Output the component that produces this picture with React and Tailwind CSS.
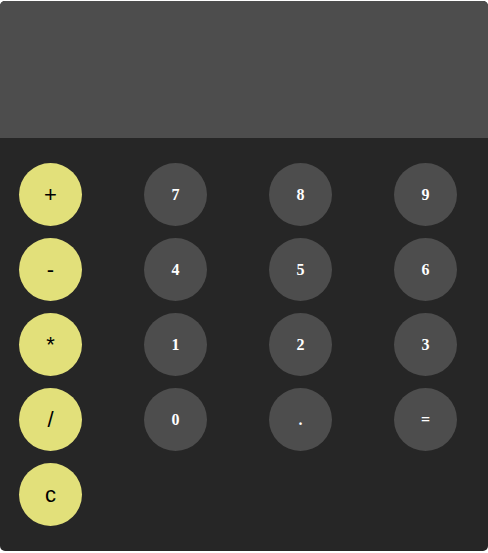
import React from 'react';

const ops = ['+', '-', '*', '/', 'c'];
const nums = [['7', '8', '9'], ['4', '5', '6'], ['1', '2', '3'], ['0', '.', '=']];

const App = () => {
  const cells = [];
  for (let r = 0; r < 5; r++) {
    cells.push(
      <button
        key={'op' + r}
        className="h-[63px] w-[63px] rounded-full bg-[#e2e07a] text-black text-[22px] font-['Liberation_Sans',sans-serif] flex items-center justify-center"
      >
        {ops[r]}
      </button>
    );
    for (let c = 0; c < 3; c++) {
      if (nums[r]) {
        cells.push(
          <button
            key={r + '-' + c}
            className="h-[63px] w-[63px] rounded-full bg-[#4d4d4d] text-white text-[16px] font-bold font-['Liberation_Serif',serif] flex items-center justify-center"
          >
            {nums[r][c]}
          </button>
        );
      } else {
        cells.push(<div key={r + '-' + c} />);
      }
    }
  }

  return (
    <div className="min-h-screen bg-white pt-px">
      <div className="w-[488px] h-[550px] rounded-[5px] overflow-hidden bg-[#262626] flex flex-col">
        {/* Display */}
        <div className="h-[137px] bg-[#4d4d4d]" />
        {/* Keypad */}
        <div className="grid grid-cols-[63px_63px_63px_63px] gap-x-[62px] gap-y-[12px] pl-[19px] pt-[25px]">
          {cells}
        </div>
      </div>
    </div>
  );
};

export default App;
